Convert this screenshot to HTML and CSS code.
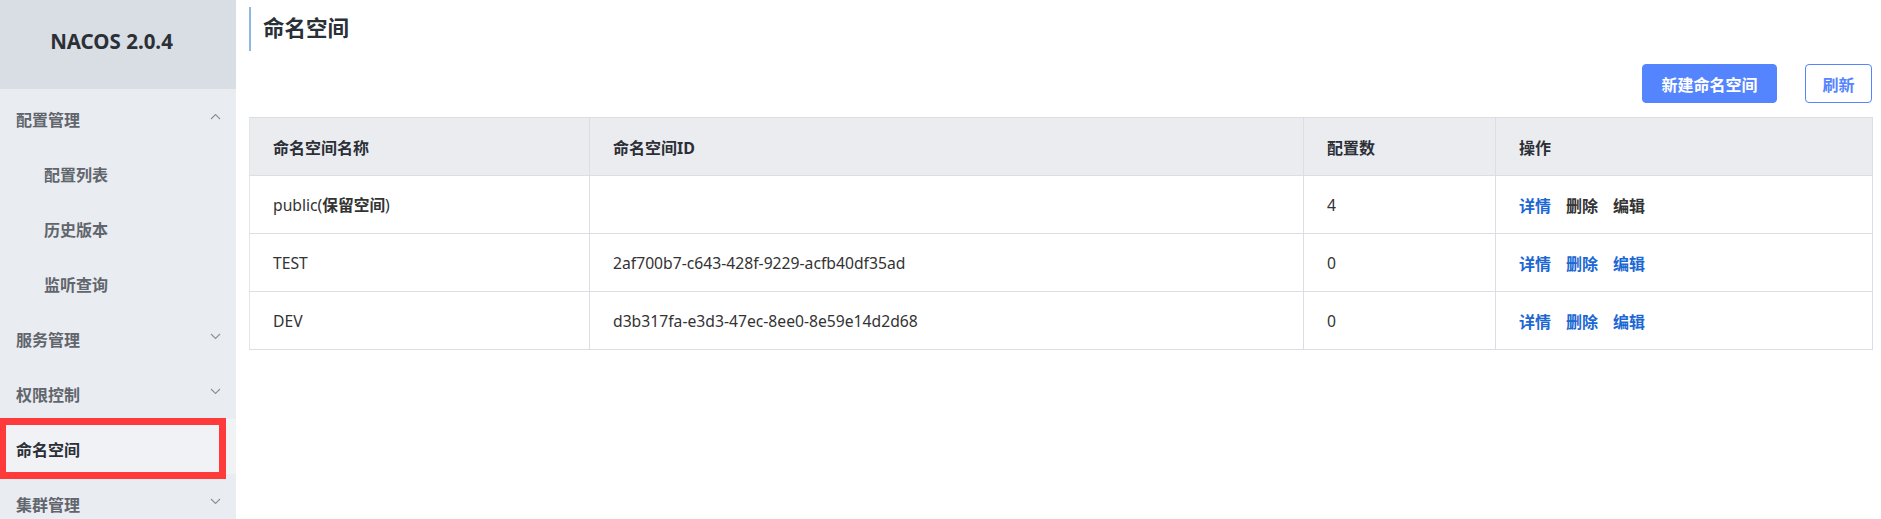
FILE: index.html
```html
<!DOCTYPE html>
<html lang="zh-CN">
<head>
<meta charset="utf-8">
<title>NACOS 2.0.4</title>
<link rel="stylesheet" href="styles.css">
</head>
<body>
<div class="app">
  <aside class="sidebar">
    <div class="brand">NACOS 2.0.4</div>
    <nav class="menu">
      <div class="menu-item group">
        <span>配置管理</span>
        <svg class="chev" width="11" height="7" viewBox="0 0 11 7"><polyline points="1,6 5.5,1.5 10,6" fill="none" stroke="#8a8f99" stroke-width="1.1"/></svg>
      </div>
      <div class="menu-item sub"><span>配置列表</span></div>
      <div class="menu-item sub"><span>历史版本</span></div>
      <div class="menu-item sub"><span>监听查询</span></div>
      <div class="menu-item group">
        <span>服务管理</span>
        <svg class="chev" width="11" height="7" viewBox="0 0 11 7"><polyline points="1,1 5.5,5.5 10,1" fill="none" stroke="#8a8f99" stroke-width="1.1"/></svg>
      </div>
      <div class="menu-item group">
        <span>权限控制</span>
        <svg class="chev" width="11" height="7" viewBox="0 0 11 7"><polyline points="1,1 5.5,5.5 10,1" fill="none" stroke="#8a8f99" stroke-width="1.1"/></svg>
      </div>
      <div class="menu-item group active">
        <span>命名空间</span>
        <div class="highlight"></div>
      </div>
      <div class="menu-item group">
        <span>集群管理</span>
        <svg class="chev" width="11" height="7" viewBox="0 0 11 7"><polyline points="1,1 5.5,5.5 10,1" fill="none" stroke="#8a8f99" stroke-width="1.1"/></svg>
      </div>
    </nav>
  </aside>
  <main class="main">
    <h1 class="page-title">命名空间</h1>
    <div class="toolbar">
      <button class="btn btn-primary">新建命名空间</button>
      <button class="btn btn-outline">刷新</button>
    </div>
    <table class="ns-table">
      <colgroup>
        <col class="c1"><col class="c2"><col class="c3"><col class="c4">
      </colgroup>
      <thead>
        <tr><th>命名空间名称</th><th>命名空间ID</th><th>配置数</th><th>操作</th></tr>
      </thead>
      <tbody>
        <tr>
          <td>public(<b>保留空间</b>)</td>
          <td></td>
          <td>4</td>
          <td class="ops"><a class="link">详情</a><a class="link disabled">删除</a><a class="link disabled">编辑</a></td>
        </tr>
        <tr>
          <td>TEST</td>
          <td>2af700b7-c643-428f-9229-acfb40df35ad</td>
          <td>0</td>
          <td class="ops"><a class="link">详情</a><a class="link">删除</a><a class="link">编辑</a></td>
        </tr>
        <tr>
          <td>DEV</td>
          <td>d3b317fa-e3d3-47ec-8ee0-8e59e14d2d68</td>
          <td>0</td>
          <td class="ops"><a class="link">详情</a><a class="link">删除</a><a class="link">编辑</a></td>
        </tr>
      </tbody>
    </table>
  </main>
</div>
</body>
</html>
```

FILE: styles.css
```css
* { box-sizing: border-box; }
html, body {
  margin: 0;
  padding: 0;
  height: 519px;
  overflow: hidden;
  background: #ffffff;
  font-family: "Noto Sans", "Noto Sans CJK SC", sans-serif;
  color: #333333;
}
.app {
  display: flex;
  height: 519px;
}
.sidebar {
  width: 236px;
  flex: 0 0 236px;
  background: #e9ecf1;
  height: 519px;
  overflow: hidden;
}
.brand {
  height: 89px;
  background: #d9dde4;
  display: flex;
  align-items: center;
  justify-content: center;
  padding-right: 13px;
  padding-bottom: 8px;
  font-family: "Noto Sans", sans-serif;
  font-weight: 700;
  font-size: 20.5px;
  color: #2b2f36;
}
.menu {
  display: flex;
  flex-direction: column;
}
.menu-item {
  position: relative;
  height: 55px;
  display: flex;
  align-items: center;
  justify-content: space-between;
  padding: 5px 15px 0 16px;
  font-size: 16px;
  font-weight: 700;
  color: #61656c;
}
.menu-item.sub {
  padding-left: 44px;
}
.menu-item .chev {
  margin-top: -6px;
}
.menu-item.active {
  background: #f0f2f6;
  color: #2b2f36;
}
.highlight {
  position: absolute;
  left: 0;
  top: -1px;
  width: 226px;
  height: 61px;
  border: 7px solid #ff3a3a;
  border-left-width: 6px;
  pointer-events: none;
}
.main {
  flex: 1;
  padding: 7px 9px 0 13px;
  min-width: 0;
}
.page-title {
  margin: 0;
  height: 44px;
  line-height: 42px;
  border-left: 2px solid #8cb8e2;
  padding-left: 12px;
  font-size: 21.5px;
  font-weight: 700;
  color: #2b2f36;
}
.toolbar {
  display: flex;
  justify-content: flex-end;
  gap: 28px;
  margin-top: 13px;
  height: 39px;
}
.btn {
  height: 39px;
  font-family: "Noto Sans CJK SC", sans-serif;
  font-size: 16px;
  font-weight: 700;
  border-radius: 4px;
  padding: 0 16px;
  cursor: pointer;
}
.btn-primary {
  width: 135px;
  background: #5584ff;
  border: 1px solid #5584ff;
  color: #ffffff;
}
.btn-outline {
  width: 67px;
  background: #ffffff;
  border: 1px solid #5584ff;
  color: #5584ff;
}
.ns-table {
  margin-top: 14px;
  width: 1623px;
  table-layout: fixed;
  border-collapse: collapse;
  border: 1px solid #dcdee3;
  font-size: 15.7px;
}
.ns-table col.c1 { width: 340px; }
.ns-table col.c2 { width: 714px; }
.ns-table col.c3 { width: 192px; }
.ns-table col.c4 { width: 377px; }
.ns-table th,
.ns-table td {
  height: 58px;
  padding: 0 22px 0 23px;
  text-align: left;
  border: 1px solid #dcdee3;
  border-left-color: #e4e6ea;
}
.ns-table th {
  background: #ebecf0;
  font-weight: 700;
  font-size: 16px;
  color: #2b2f36;
}
.ns-table td {
  color: #333333;
  font-weight: 400;
}
.ns-table td b {
  font-weight: 700;
}
.ops .link {
  font-weight: 700;
  font-size: 16px;
  color: #1b67d3;
  margin-right: 15px;
  cursor: pointer;
}
.ops .link.disabled {
  color: #333333;
}
```
